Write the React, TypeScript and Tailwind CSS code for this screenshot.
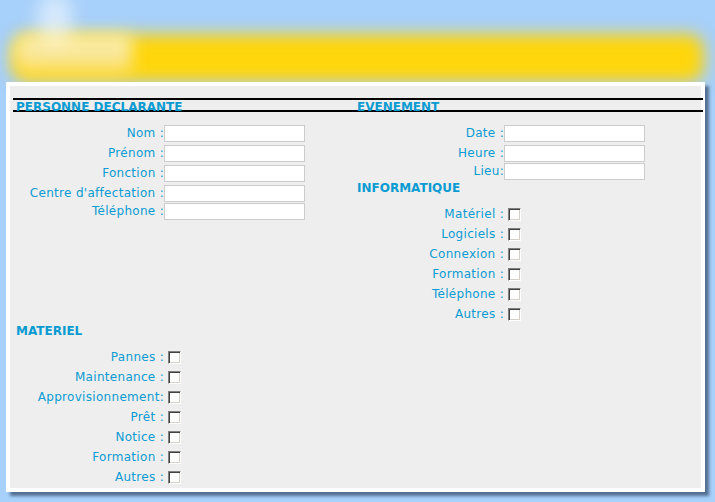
import React from "react";

const font = "font-['DejaVu_Sans','Verdana',sans-serif]";

function Heading({ children }: { children: React.ReactNode }) {
    return <div className="h-[14px] pl-[3px] text-[12px] leading-[14px] font-bold">{children}</div>;
}

function TextRow({ label, labelW, tight = false }: { label: string; labelW: string; tight?: boolean }) {
    return (
        <div className={`flex h-[20px] items-center ${tight ? "-mt-[2px]" : ""}`}>
            <span className={`${labelW} shrink-0 text-right leading-[20px] tracking-[0.3px] whitespace-nowrap`}>{label}</span>
            <input type="text" className="h-[17px] w-[141px] border border-[#cccccc] bg-white outline-none" />
        </div>
    );
}

function CheckRow({ label, labelW }: { label: string; labelW: string }) {
    return (
        <div className="flex h-[20px] items-center">
            <span className={`${labelW} shrink-0 text-right leading-[20px] tracking-[0.3px] whitespace-nowrap`}>{label}</span>
            <span className="ml-[4px] h-[13px] w-[13px] border border-t-[#808080] border-l-[#808080] border-b-white border-r-white bg-white shadow-[inset_1px_1px_0_#404040,inset_-1px_-1px_0_#d4d0c8]" />
        </div>
    );
}

export default function App() {
    return (
        <div className={`relative h-[502px] w-[715px] overflow-hidden bg-[#a7d0fa] text-[12px] text-[#0a9bd2] ${font}`}>
            {/* blurred banner */}
            <div className="relative h-[82px]">
                <div className="absolute left-[12px] top-[34px] h-[48px] w-[692px] rounded-[16px] bg-[#ffd60c] blur-[8px]" />
                <div className="absolute left-[14px] top-[34px] h-[40px] w-[118px] rounded-l-[16px] bg-gradient-to-b from-[#f8efb8] via-[#f9e79a] to-[#fbdc5a] blur-[8px]" />
                <div className="absolute left-[38px] top-[-6px] h-[50px] w-[34px] rounded-full bg-white/55 blur-[9px]" />
            </div>

            {/* form panel */}
            <div className="relative ml-[6px] h-[410px] w-[699px] bg-white p-[4px] shadow-[4px_4px_3px_rgba(40,60,90,0.65)]">
                <div className="h-full w-full bg-[#eeeeee] pl-[3px] pt-[12px]">
                    <div className="w-[690px]">
                        {/* header row */}
                        <div className="flex h-[14px] border-y-2 border-black">
                            <div className="w-[341px] pl-[3px] text-[12px] leading-[14px] font-bold">PERSONNE DECLARANTE</div>
                            <div className="pl-[3px] text-[12px] leading-[14px] font-bold">EVENEMENT</div>
                        </div>

                        <div className="flex pt-[11px]">
                            <div className="w-[341px]">
                                <TextRow label="Nom :" labelW="w-[151px]" />
                                <TextRow label="Prénom :" labelW="w-[151px]" />
                                <TextRow label="Fonction :" labelW="w-[151px]" />
                                <TextRow label="Centre d'affectation :" labelW="w-[151px]" />
                                <TextRow label="Téléphone :" labelW="w-[151px]" tight />
                            </div>
                            <div className="w-[349px]">
                                <TextRow label="Date :" labelW="w-[150px]" />
                                <TextRow label="Heure :" labelW="w-[150px]" />
                                <TextRow label="Lieu:" labelW="w-[150px]" tight />
                                <Heading>INFORMATIQUE</Heading>
                                <div className="pt-[9px]">
                                    <CheckRow label="Matériel :" labelW="w-[150px]" />
                                    <CheckRow label="Logiciels :" labelW="w-[150px]" />
                                    <CheckRow label="Connexion :" labelW="w-[150px]" />
                                    <CheckRow label="Formation :" labelW="w-[150px]" />
                                    <CheckRow label="Téléphone :" labelW="w-[150px]" />
                                    <CheckRow label="Autres :" labelW="w-[150px]" />
                                </div>
                            </div>
                        </div>

                        <div className="w-[341px]">
                            <Heading>MATERIEL</Heading>
                            <div className="pt-[9px]">
                                <CheckRow label="Pannes :" labelW="w-[151px]" />
                                <CheckRow label="Maintenance :" labelW="w-[151px]" />
                                <CheckRow label="Approvisionnement:" labelW="w-[151px]" />
                                <CheckRow label="Prêt :" labelW="w-[151px]" />
                                <CheckRow label="Notice :" labelW="w-[151px]" />
                                <CheckRow label="Formation :" labelW="w-[151px]" />
                                <CheckRow label="Autres :" labelW="w-[151px]" />
                            </div>
                        </div>
                    </div>
                </div>
            </div>
        </div>
    );
}
